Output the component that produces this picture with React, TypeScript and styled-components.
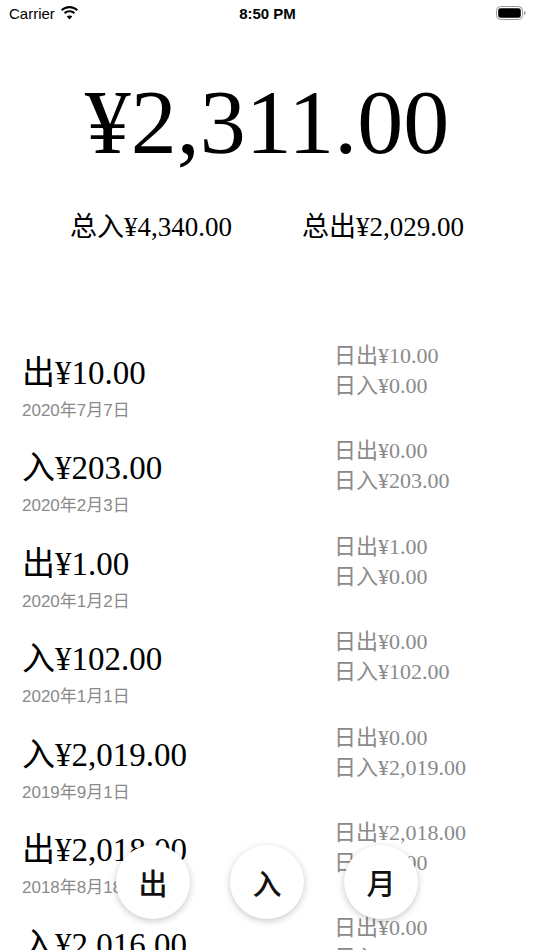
import React from 'react';
import styled, {createGlobalStyle} from 'styled-components'

const GlobalStyle = createGlobalStyle`
  html, body {
    margin: 0;
    padding: 0;
    background: #ffffff;
  }
`

const SERIF = `"Liberation Serif", "Noto Sans CJK SC", serif`
const SANS = `"Liberation Sans", "Noto Sans CJK SC", sans-serif`

const Screen = styled.div`
  position: relative;
  width: 534px;
  height: 950px;
  overflow: hidden;
  background: #ffffff;
  color: #000000;
  font-family: ${SERIF};
`

const StatusBar = styled.div`
  height: 26px;
  display: grid;
  grid-template-columns: 1fr auto 1fr;
  align-items: center;
  padding: 0 8px 0 9px;
  font-family: ${SANS};
  font-size: 15px;
`

const Carrier = styled.div`
  display: flex;
  align-items: center;
  gap: 5px;
`

const Clock = styled.div`
  font-weight: bold;
  font-size: 15px;
`

const BatteryWrap = styled.div`
  display: flex;
  justify-content: flex-end;
`

const Header = styled.div`
  display: flex;
  flex-direction: column;
  align-items: center;
  padding-top: 50px;
`

const Balance = styled.div`
  font-size: 92px;
  line-height: 92px;
`

const Totals = styled.div`
  align-self: stretch;
  display: flex;
  justify-content: space-evenly;
  margin-top: 46px;
  font-size: 27px;
  line-height: 27px;
`

const List = styled.div`
  margin-top: 100px;
  display: flex;
  flex-direction: column;
`

const Row = styled.div`
  height: 95.4px;
  flex-shrink: 0;
  display: grid;
  grid-template-columns: 334px 1fr;
`

const Left = styled.div`
  padding-left: 22px;
  display: flex;
  flex-direction: column;
`

const Amount = styled.div`
  font-size: 33px;
  line-height: 40px;
  margin-top: 12px;
  white-space: nowrap;
`

const DateText = styled.div`
  font-family: ${SANS};
  font-size: 17px;
  line-height: 22px;
  color: #8a8a8a;
  margin-top: 7px;
`

const Right = styled.div`
  display: flex;
  flex-direction: column;
  font-size: 22px;
  line-height: 30px;
  color: #8a8a8a;
  white-space: nowrap;
`

const Actions = styled.div`
  position: absolute;
  left: 0;
  right: 0;
  bottom: 31px;
  display: flex;
  justify-content: center;
  gap: 40px;
`

const RoundButton = styled.button`
  width: 74px;
  height: 74px;
  border-radius: 50%;
  border: none;
  background: #ffffff;
  box-shadow: 0 2px 7px rgba(0, 0, 0, 0.22);
  font-family: "Noto Sans CJK SC", sans-serif;
  font-size: 29px;
  font-weight: 500;
  color: #111111;
  display: flex;
  align-items: center;
  justify-content: center;
  padding: 0;
`

type Record = {
    amount: string
    date: string
    dayOut: string
    dayIn: string
}

const records: Record[] = [
    {amount: '出¥10.00', date: '2020年7月7日', dayOut: '¥10.00', dayIn: '¥0.00'},
    {amount: '入¥203.00', date: '2020年2月3日', dayOut: '¥0.00', dayIn: '¥203.00'},
    {amount: '出¥1.00', date: '2020年1月2日', dayOut: '¥1.00', dayIn: '¥0.00'},
    {amount: '入¥102.00', date: '2020年1月1日', dayOut: '¥0.00', dayIn: '¥102.00'},
    {amount: '入¥2,019.00', date: '2019年9月1日', dayOut: '¥0.00', dayIn: '¥2,019.00'},
    {amount: '出¥2,018.00', date: '2018年8月18日', dayOut: '¥2,018.00', dayIn: '¥0.00'},
    {amount: '入¥2,016.00', date: '2016年6月16日', dayOut: '¥0.00', dayIn: '¥2,016.00'},
]

const Wifi = () => (
    <svg width="19" height="14" viewBox="0 0 19 14">
        <path d="M9.5 2.2c2.7 0 5.2 1 7.1 2.8l1.4-1.5C15.7 1.3 12.7 0 9.5 0S3.3 1.3 1 3.5l1.4 1.5C4.3 3.2 6.8 2.2 9.5 2.2z" fill="#000"/>
        <path d="M9.5 6.3c1.6 0 3.1.6 4.2 1.6l1.4-1.5C13.6 5 11.6 4.2 9.5 4.2S5.4 5 3.9 6.4l1.4 1.5c1.1-1 2.6-1.6 4.2-1.6z" fill="#000"/>
        <path d="M9.5 13.5l2.8-3c-.7-.7-1.7-1.1-2.8-1.1s-2.100.4-2.8 1.1l2.8 3z" fill="#000"/>
    </svg>
)

const Battery = () => (
    <svg width="30" height="14" viewBox="0 0 30 14">
        <rect x="0.5" y="0.5" width="26" height="13" rx="4" fill="none" stroke="#9a9a9a"/>
        <rect x="2.2" y="2.2" width="22.6" height="9.6" rx="2.4" fill="#000"/>
        <path d="M28 4.7v4.6c.9-.3 1.5-1.2 1.5-2.3s-.6-2-1.5-2.3z" fill="#9a9a9a"/>
    </svg>
)

const App: React.FC = () => {
    return (
        <Screen>
            <GlobalStyle/>
            <StatusBar>
                <Carrier>
                    Carrier
                    <Wifi/>
                </Carrier>
                <Clock>8:50 PM</Clock>
                <BatteryWrap>
                    <Battery/>
                </BatteryWrap>
            </StatusBar>
            <Header>
                <Balance>¥2,311.00</Balance>
                <Totals>
                    <span>总入¥4,340.00</span>
                    <span>总出¥2,029.00</span>
                </Totals>
            </Header>
            <List>
                {
                    records.map(record => (
                        <Row key={record.date}>
                            <Left>
                                <Amount>{record.amount}</Amount>
                                <DateText>{record.date}</DateText>
                            </Left>
                            <Right>
                                <span>日出{record.dayOut}</span>
                                <span>日入{record.dayIn}</span>
                            </Right>
                        </Row>
                    ))
                }
            </List>
            <Actions>
                <RoundButton>出</RoundButton>
                <RoundButton>入</RoundButton>
                <RoundButton>月</RoundButton>
            </Actions>
        </Screen>
    );
};

export default App;
